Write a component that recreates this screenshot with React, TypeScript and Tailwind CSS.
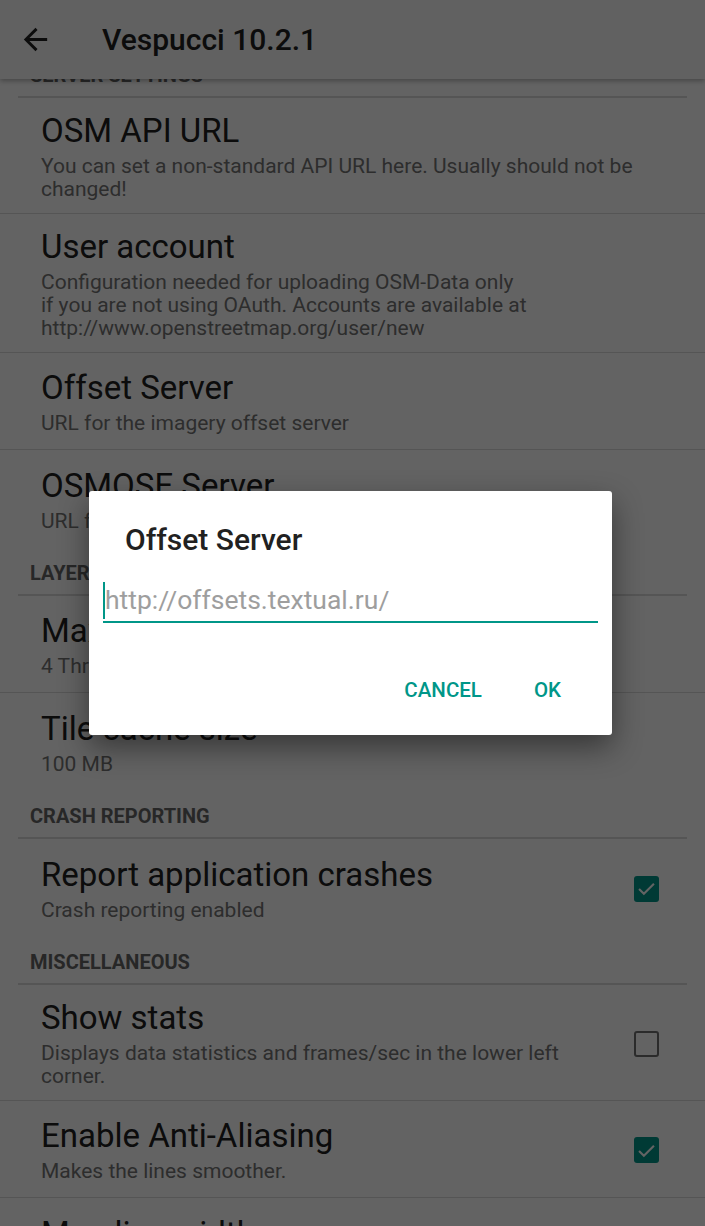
/**
 * Vespucci preferences screen with the "Offset Server" edit dialog open.
 */

type PrefItem = {
  title: string;
  summary?: string;
  checked?: boolean;
  divider?: boolean;
};

type Section = {
  header: string;
  items: PrefItem[];
};

const sections: Section[] = [
  {
    header: 'SERVER SETTINGS',
    items: [
      {
        title: 'OSM API URL',
        summary: 'You can set a non-standard API URL here. Usually should not be changed!',
        divider: true,
      },
      {
        title: 'User account',
        summary:
          'Configuration needed for uploading OSM-Data only\nif you are not using OAuth. Accounts are available at\nhttp://www.openstreetmap.org/user/new',
        divider: true,
      },
      { title: 'Offset Server', summary: 'URL for the imagery offset server', divider: true },
      { title: 'OSMOSE Server', summary: 'URL for the OSMOSE server' },
    ],
  },
  {
    header: 'LAYERS',
    items: [
      { title: 'Maximum download threads', summary: '4 Threads', divider: true },
      { title: 'Tile cache size', summary: '100 MB' },
    ],
  },
  {
    header: 'CRASH REPORTING',
    items: [{ title: 'Report application crashes', summary: 'Crash reporting enabled', checked: true }],
  },
  {
    header: 'MISCELLANEOUS',
    items: [
      {
        title: 'Show stats',
        summary: 'Displays data statistics and frames/sec in the lower left corner.',
        checked: false,
        divider: true,
      },
      { title: 'Enable Anti-Aliasing', summary: 'Makes the lines smoother.', checked: true, divider: true },
      { title: 'Map line width', summary: 'Width of the lines drawn on the map' },
    ],
  },
];

const Checkbox = ({ checked }: { checked: boolean }) =>
  checked ? (
    <div className="w-[25px] h-[26px] rounded-[3px] bg-[#009688] flex items-center justify-center">
      <svg width="21" height="21" viewBox="0 0 24 24" fill="none">
        <path d="M3.5 12.5l5.5 5.5L20.5 6.5" stroke="white" strokeWidth="2.4" />
      </svg>
    </div>
  ) : (
    <div className="w-[25px] h-[26px] rounded-[3px] border-[2.5px] border-[#6f6f6f]" />
  );

const PrefRow = ({ item }: { item: PrefItem }) => (
  <div
    className={`flex items-center min-h-[97px] pl-[41px] pr-[46px] pt-[14px] pb-[12px] ${
      item.divider ? 'border-b border-[#dcdcdc]' : ''
    }`}
  >
    <div className={`flex-1 min-w-0 ${item.checked !== undefined ? 'pr-[60px]' : ''}`}>
      <div className="text-[33px] leading-[38px] text-[#212121] whitespace-nowrap">{item.title}</div>
      {item.summary && (
        <div className="mt-[5px] text-[21px] leading-[23px] text-[#757575] whitespace-pre-line">
          {item.summary}
        </div>
      )}
    </div>
    {item.checked !== undefined && <Checkbox checked={item.checked} />}
  </div>
);

const App = () => {
  return (
    <div
      className="relative w-[705px] h-[1226px] overflow-hidden bg-white"
      style={{ fontFamily: "Roboto, 'Noto Sans', sans-serif" }}
    >
      {/* Toolbar */}
      <div className="relative z-10 h-[79px] bg-[#fafafa] flex items-center shadow-[0_2px_5px_rgba(0,0,0,0.3)]">
        <svg className="ml-[18px]" width="35" height="35" viewBox="0 0 24 24" fill="#212121">
          <path d="M20 11H7.83l5.59-5.59L12 4l-8 8 8 8 1.41-1.41L7.83 13H20v-2z" />
        </svg>
        <span className="ml-[49px] text-[30px] font-medium text-[#212121]">Vespucci 10.2.1</span>
      </div>

      {/* Preference list */}
      <div className="-mt-[30px]">
        {sections.map((section) => (
          <div key={section.header}>
            <div className="pl-[30px] pt-[15px] pb-[10px] text-[20px] leading-[22px] font-bold text-[#666]">
              {section.header}
            </div>
            <div className="mx-[18px] h-[2px] bg-[#dcdcdc]" />
            {section.items.map((item) => (
              <PrefRow key={item.title} item={item} />
            ))}
          </div>
        ))}
      </div>

      {/* Dim + dialog */}
      <div className="absolute inset-0 z-20 bg-black/[0.61] flex items-center justify-center">
        <div className="w-[523px] h-[244px] -ml-[4px] rounded-[3px] bg-white flex flex-col shadow-[0_12px_30px_rgba(0,0,0,0.45)]">
          <div className="pl-[36px] pt-[32px] text-[30px] leading-[34px] font-medium text-[#212121]">
            Offset Server
          </div>
          <div className="mx-[14px] mt-[22px] h-[44px] flex items-center border-b-2 border-[#009688]">
            <span className="w-[2px] h-[37px] bg-[#009688]" />
            <span className="text-[26.5px] text-[#9e9e9e]">http://offsets.textual.ru/</span>
          </div>
          <div className="mt-auto pb-[27px] pr-[51px] flex justify-end items-center gap-[52px] h-[36px] box-content">
            <span className="text-[20.5px] font-medium text-[#009688]">CANCEL</span>
            <span className="text-[20.5px] font-medium text-[#009688]">OK</span>
          </div>
        </div>
      </div>
    </div>
  );
};

export default App;
